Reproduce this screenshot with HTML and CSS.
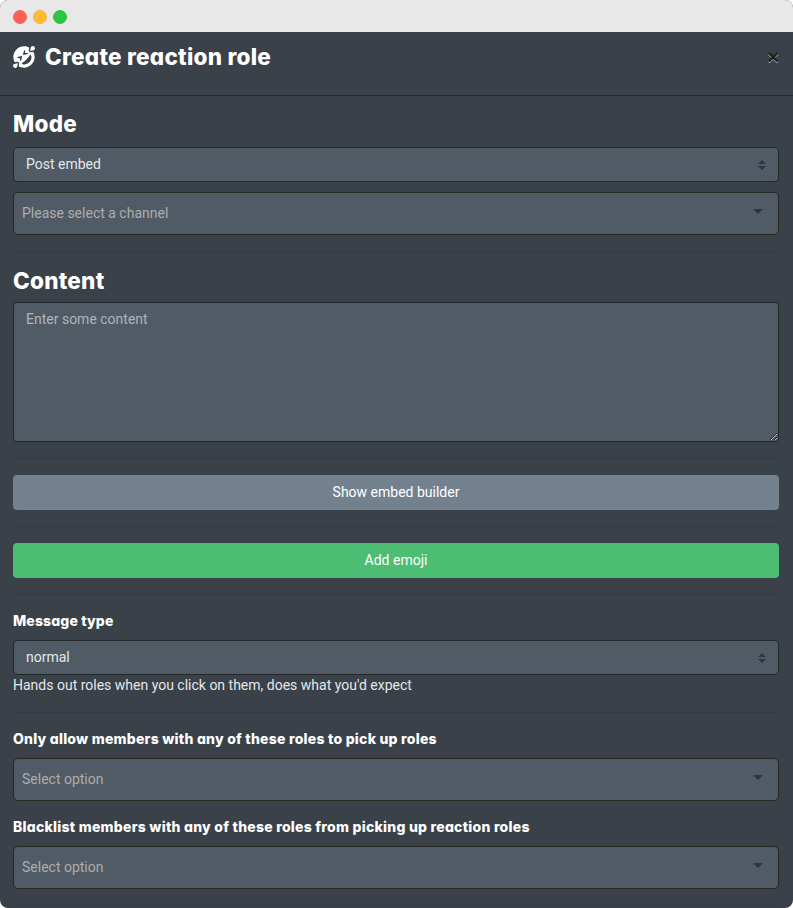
FILE: index.html
```html
<!DOCTYPE html>
<html lang="en">
<head>
<meta charset="utf-8">
<title>Create reaction role</title>
<link rel="stylesheet" href="styles.css">
</head>
<body>
<div class="window">
  <div class="titlebar"><span class="dot red"></span><span class="dot yellow"></span><span class="dot green"></span></div>
  <header class="header">
    <svg class="emoji" viewBox="0 0 512 512"><path fill="currentColor" d="M409.6 111.9c22.6-3.2 73.5-12 88.3-26.8 19.2-19.2 18.9-50.6-.7-70.2S446-5 426.9 14.2c-14.8 14.8-23.5 65.7-26.8 88.3-.8 5.5 3.9 10.2 9.5 9.4zM102.4 400.1c-22.6 3.2-73.5 12-88.3 26.8-19.1 19.1-18.8 50.6.8 70.2s51 19.9 70.2.7c14.8-14.8 23.5-65.7 26.8-88.3.8-5.5-3.9-10.2-9.5-9.4zm311.7-256.5c-33 3.9-48.6-25.1-45.7-45.7 3.4-24 7.4-42.1 11.5-56.5C285.1-13.4 161.9-.5 80.6 80.6-.5 161.7-13.4 285 41.4 379.9c14.4-4.1 32.4-8 56.5-11.5 33.2-3.9 48.6 25.2 45.7 45.7-3.4 24-7.4 42.1-11.5 56.5 94.8 54.8 218.1 41.9 299.3-39.2s94-204.4 39.2-299.3c-14.4 4.1-32.5 8-56.5 11.5zM255.7 106c3.3-13.2 22.4-11.5 23.6 1.8l4.8 52.3 52.3 4.8c13.4 1.2 14.9 20.3 1.8 23.6l-90.5 22.6c-8.9 2.2-16.7-5.9-14.5-14.5l22.5-90.6zm-90.9 230.3L160 284l-52.3-4.8c-13.4-1.2-14.9-20.3-1.8-23.6l90.5-22.6c8.8-2.2 16.7 5.8 14.5 14.5L188.3 338c-3.1 13.2-22.2 11.7-23.5-1.7zm215.7 44.2c-29.3 29.3-75.7 50.4-116.7 50.4-18.9 0-36.6-4.5-51-14.7-9.8-6.9-8.7-21.8 2-27.2 28.3-14.6 63.9-42.4 97.8-76.3s61.7-69.6 76.3-97.8c5.4-10.5 20.2-11.9 27.3-2 32.3 45.3 7.1 124.7-35.7 167.6z"/></svg>
    <h3 class="title">Create reaction role</h3>
    <span class="close">×</span>
  </header>
  <main class="body">
    <h3 class="section mode">Mode</h3>
    <div class="select"><span>Post embed</span><svg class="updown" viewBox="0 0 8 10"><path d="M0 4l4-4 4 4zM0 6h8l-4 4z"/></svg></div>
    <div class="multi first"><span>Please select a channel</span><i class="caret"></i></div>
    <hr>
    <h3 class="section content">Content</h3>
    <textarea class="area" placeholder="Enter some content"></textarea>
    <hr>
    <button class="btn gray">Show embed builder</button>
    <hr>
    <button class="btn success">Add emoji</button>
    <hr>
    <h5 class="label type">Message type</h5>
    <div class="select"><span>normal</span><svg class="updown" viewBox="0 0 8 10"><path d="M0 4l4-4 4 4zM0 6h8l-4 4z"/></svg></div>
    <p class="help">Hands out roles when you click on them, does what you'd expect</p>
    <hr>
    <h5 class="label allow">Only allow members with any of these roles to pick up roles</h5>
    <div class="multi"><span>Select option</span><i class="caret"></i></div>
    <h5 class="label deny">Blacklist members with any of these roles from picking up reaction roles</h5>
    <div class="multi"><span>Select option</span><i class="caret"></i></div>
    <hr>
  </main>
</div>
</body>
</html>
```
FILE: styles.css
```css
* { box-sizing: border-box; }
body { margin: 0; background: #fff; color: #e4e7ea; font: 14px/21px Roboto, sans-serif; }
.window { height: 908px; background: #3a4149; border-radius: 8px; overflow: hidden; }
.titlebar { height: 32px; background: #e8e8e8; display: flex; gap: 6px; align-items: center; padding: 2px 0 0 13px; }
.dot { width: 14px; height: 14px; border-radius: 50%; }
.red { background: #ff5f57; border: 1px solid #f0655e; }
.yellow { background: #febc2e; border: 1px solid #eeb342; }
.green { background: #28c840; border: 1px solid #36b94a; }
.header { height: 64px; border-bottom: 1px solid #23282c; display: flex; align-items: flex-start; padding: 0 14px 0 13px; color: #fff; }
.emoji { width: 22px; height: 22px; margin: 14px 10px 0 0; }
h3, h5 { margin: 0; color: #fff; font-family: Inter, sans-serif; font-weight: 800; font-feature-settings: "cv11"; white-space: nowrap; }
.title, .section { font-size: 22.5px; line-height: 27px; letter-spacing: 0.25px; }
.title { margin-top: 11px; }
.close { margin: 14px 0 0 auto; font: bold 21px/21px "Liberation Sans", sans-serif; color: #1d2124; text-shadow: 0 1px 0 #a0a6ac; width: 12px; }
.body { padding: 0 14px 0 13px; }
.mode { padding: 14px 0 10px; }
.content { margin-top: -1px; padding: 0 0 8px; }
.select, .multi { display: flex; justify-content: space-between; background: #515b65; border: 1px solid #23282c; border-radius: 4px; }
.select { height: 35px; align-items: center; padding: 0 12px; }
.updown { width: 8px; height: 10px; fill: #2f353a; }
.multi { height: 43px; align-items: center; padding: 0 15px 0 8px; color: #adadad; border-color: #25291f; border-radius: 5px; }
.first { margin-top: 10px; }
.caret { border: 5px solid transparent; border-top-color: #2f353a; border-bottom: 0; margin-top: -4px; }
hr { margin: 16px 0; border: 0; border-top: 1px solid #343a40; }
.area { display: block; width: 100%; height: 140px; padding: 6px 12px; background: #515b65; border: 1px solid #23282c; border-radius: 4px; font: inherit; color: #e4e7ea; resize: vertical; }
.area::placeholder { color: #acb4bc; opacity: 1; }
.btn { display: block; width: 100%; height: 35px; border: 0; border-radius: 4px; color: #fff; font: inherit; }
.gray { background: #73818f; }
.success { background: #4dbd74; }
.label { font-size: 14px; line-height: 17px; letter-spacing: 0.25px; }
.type { padding: 1px 0 11px; letter-spacing: 0.15px; }
.help { margin: 0; }
.allow { padding: 1px 0 11px; letter-spacing: 0.24px; }
.deny { padding: 17px 0 11px; }
```
